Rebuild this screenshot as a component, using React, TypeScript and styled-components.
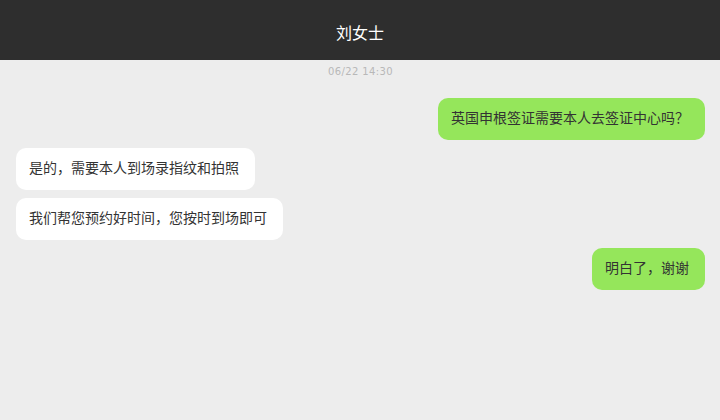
import React from "react"
import styled, { createGlobalStyle } from "styled-components"

interface Message {
  id: number
  mine: boolean
  text: string
}

const messages: Message[] = [
  { id: 1, mine: true, text: "英国申根签证需要本人去签证中心吗？" },
  { id: 2, mine: false, text: "是的，需要本人到场录指纹和拍照" },
  { id: 3, mine: false, text: "我们帮您预约好时间，您按时到场即可" },
  { id: 4, mine: true, text: "明白了，谢谢" },
]

const App = () => {
  return (
    <>
      <GlobalStyle />
      <Page>
        <Header>刘女士</Header>
        <Chat>
          <Time>06/22 14:30</Time>
          <List>
            {messages.map(msg => (
              <Row key={msg.id} mine={msg.mine}>
                <Bubble mine={msg.mine}>{msg.text}</Bubble>
              </Row>
            ))}
          </List>
        </Chat>
      </Page>
    </>
  )
}

export default App

const GlobalStyle = createGlobalStyle`
  html, body {
    margin: 0;
    padding: 0;
    background: #ededed;
    font-family: "Noto Sans CJK SC", "Noto Sans", sans-serif;
  }
`

const Page = styled.div`
  width: 720px;
  height: 420px;
  display: flex;
  flex-direction: column;
  background: #ededed;
`

const Header = styled.div`
  height: 60px;
  flex-shrink: 0;
  display: flex;
  align-items: center;
  justify-content: center;
  background: #2e2e2e;
  color: #ffffff;
  font-size: 16px;
  padding-top: 3px;
  box-sizing: border-box;
`

const Chat = styled.div`
  flex: 1;
  display: flex;
  flex-direction: column;
  padding: 0 15px 0 16px;
`

/* 会话时间 */
const Time = styled.div`
  text-align: center;
  font-family: "DejaVu Sans", sans-serif;
  font-size: 10px;
  letter-spacing: 0.4px;
  color: #b8b8b8;
  line-height: 12px;
  margin: 6px 0 20px;
`

const List = styled.div`
  display: flex;
  flex-direction: column;
  gap: 8px;
`

interface MineProps {
  mine: boolean
}

const Row = styled.div.withConfig({ shouldForwardProp: p => p !== "mine" })<MineProps>`
  display: flex;
  justify-content: ${props => (props.mine ? "flex-end" : "flex-start")};
`

/* 自己发的是绿色气泡，对方是白色 */
const Bubble = styled.div.withConfig({ shouldForwardProp: p => p !== "mine" })<MineProps>`
  height: 42px;
  box-sizing: border-box;
  padding: 0 16px 4px 13px;
  display: flex;
  align-items: center;
  border-radius: 10px;
  font-size: 14px;
  color: #333333;
  background: ${props => (props.mine ? "#95e65b" : "#ffffff")};
`
